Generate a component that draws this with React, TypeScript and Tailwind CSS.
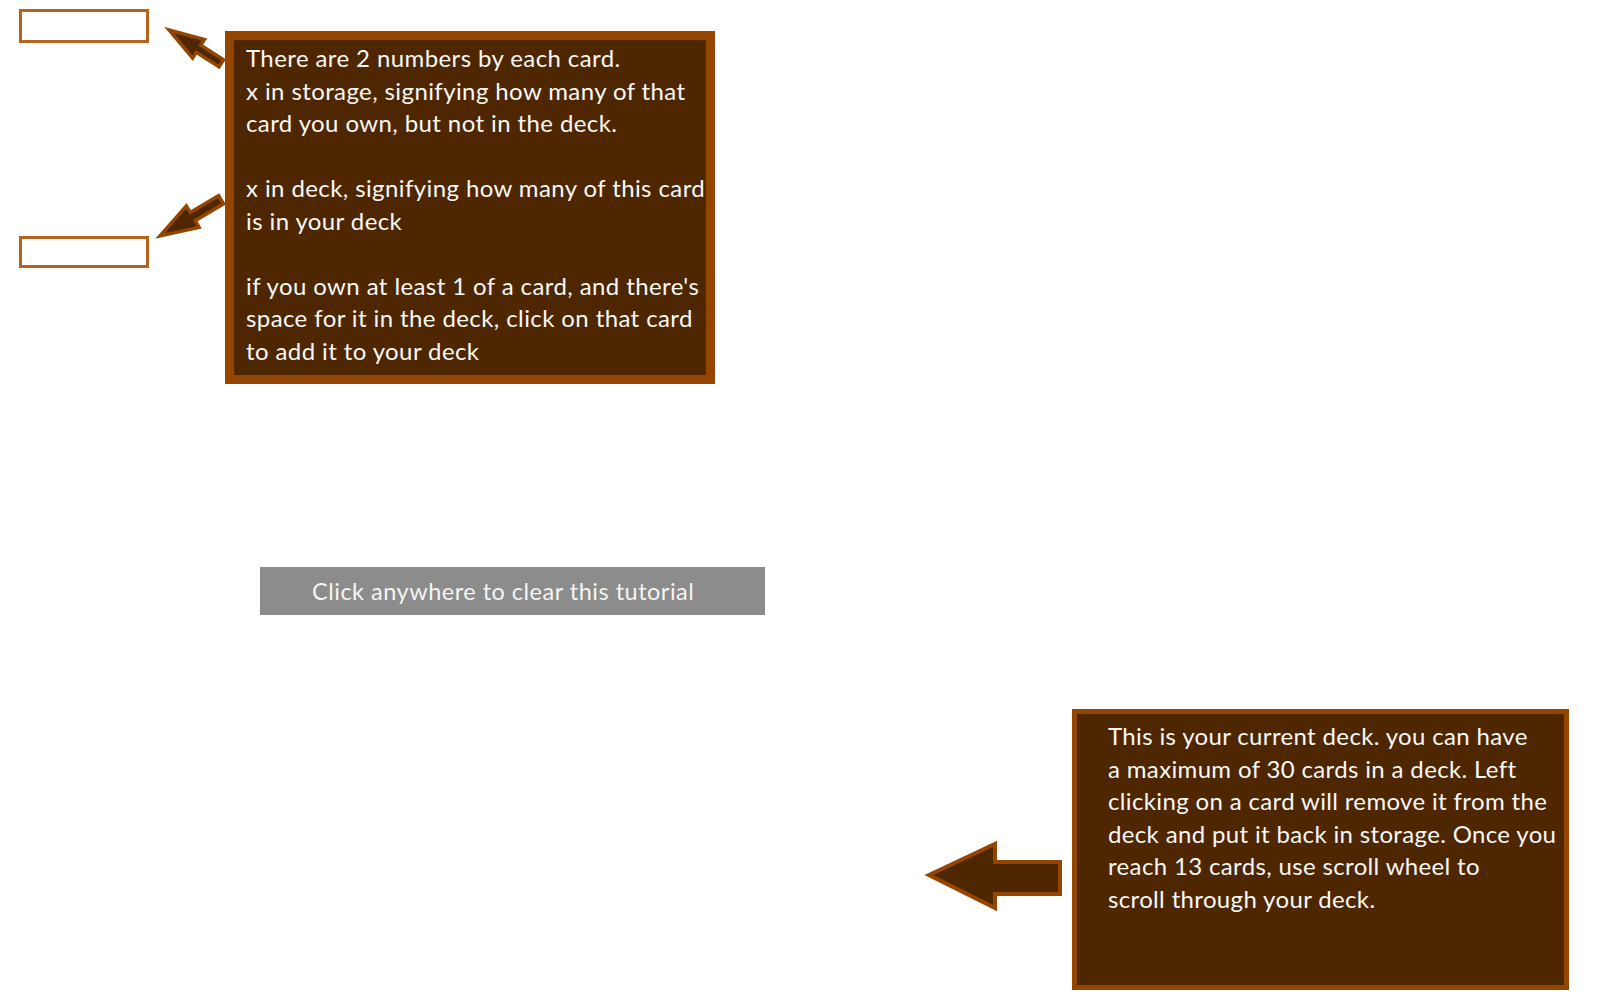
import React from "react";

const box1Lines = [
  "There are 2 numbers by each card.",
  "x in storage, signifying how many of that",
  "card you own, but not in the deck.",
  "",
  "x in deck, signifying how many of this card",
  "is in your deck",
  "",
  "if you own at least 1 of a card, and there's",
  "space for it in the deck, click on that card",
  "to add it to your deck",
];

const box2Lines = [
  "This is your current deck. you can have",
  "a maximum of 30 cards in a deck. Left",
  "clicking on a card will remove it from the",
  "deck and put it back in storage. Once you",
  "reach 13 cards, use scroll wheel to",
  "scroll through your deck.",
];

function arrowPoints(L: number, H: number, W: number, S: number) {
  return `0,0 ${H},${-W} ${H},${-S} ${L},${-S} ${L},${S} ${H},${S} ${H},${W}`;
}

export default function App() {
  return (
    <div
      className="relative w-[1600px] h-[1000px] bg-white overflow-hidden"
      style={{ fontFamily: "Lato, 'Open Sans', sans-serif" }}
    >
      {/* storage / deck number placeholders */}
      <div className="absolute left-[19px] top-[9px] w-[130px] h-[34px] border-[3px] border-[#b8621b]" />
      <div className="absolute left-[19px] top-[236px] w-[130px] h-[32px] border-[3px] border-[#b8621b]" />

      {/* info box 1 */}
      <div className="absolute left-[225px] top-[31px] w-[490px] h-[353px] border-[9px] border-[#944500] bg-[#4e2700] pl-[12px] pt-[2px] text-[24px] tracking-[0.4px] leading-[32.5px] text-[#f7f7f7]">
        {box1Lines.map((l, i) => (
          <div key={i} className="whitespace-pre h-[32.5px]">
            {l}
          </div>
        ))}
      </div>

      {/* clear tutorial button */}
      <div className="absolute left-[260px] top-[567px] w-[505px] h-[48px] bg-[#8c8c8c] pl-[52px] text-[23.5px] tracking-[0.5px] leading-[48px] text-[#f4f4f4] whitespace-nowrap">
        Click anywhere to clear this tutorial
      </div>

      {/* info box 2 */}
      <div className="absolute left-[1072px] top-[709px] w-[497px] h-[281px] border-[5px] border-[#944500] bg-[#4e2700] pl-[31px] pt-[6px] text-[24px] tracking-[0.35px] leading-[32.5px] text-[#f7f7f7]">
        {box2Lines.map((l, i) => (
          <div key={i} className="whitespace-pre h-[32.5px]">
            {l}
          </div>
        ))}
      </div>

      {/* arrows */}
      <svg
        className="absolute left-0 top-0 pointer-events-none"
        width={1600}
        height={1000}
        viewBox="0 0 1600 1000"
      >
        <g transform="translate(169,30) rotate(32.5)">
          <polygon
            points={arrowPoints(62, 35, 11, 4.2)}
            fill="#4e2700"
            stroke="#944500"
            strokeWidth={3.5}
            strokeLinejoin="miter"
          />
        </g>
        <g transform="translate(160,236) rotate(-30.7)">
          <polygon
            points={arrowPoints(71, 38, 12.5, 4.8)}
            fill="#4e2700"
            stroke="#944500"
            strokeWidth={3.5}
            strokeLinejoin="miter"
          />
        </g>
        <polygon
          points="929,875 995,844 995,862 1060,862 1060,894 995,894 995,908"
          fill="#4e2700"
          stroke="#944500"
          strokeWidth={4}
          strokeLinejoin="miter"
        />
      </svg>
    </div>
  );
}
